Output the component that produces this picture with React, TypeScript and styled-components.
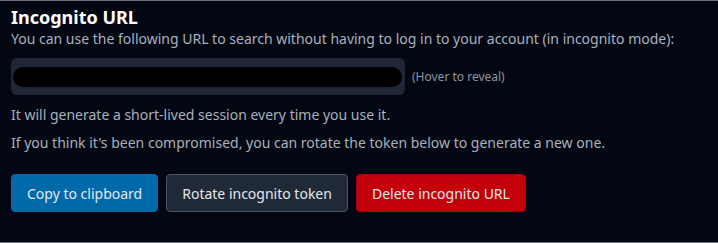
import styled, { createGlobalStyle } from 'styled-components'

const Global = createGlobalStyle`
    html, body {
        margin: 0;
        padding: 0;
        background: #030712;
    }
    body {
        font-family: "Noto Sans", "Open Sans", sans-serif;
    }
`

const Section = styled.section`
    box-sizing: border-box;
    height: 243px;
    padding: 4px 11px 0 11px;
    border-top: solid 1px #6b7280;
    border-bottom: solid 1px #6b7280;
    background: #030712;
    color: #a8b1bd;
`

const Title = styled.h2`
    margin: 0;
    font-size: 18px;
    line-height: 24px;
    font-weight: 700;
    color: #ffffff;
`

const Text = styled.p<{ $gap?: number }>`
    margin: ${props => props.$gap ?? 0}px 0 0 0;
    font-size: 14px;
    line-height: 20px;
`

const UrlRow = styled.div`
    display: flex;
    align-items: center;
    gap: 7px;
    margin: 9px 0 10px 0;
`

const UrlBox = styled.div`
    box-sizing: border-box;
    display: flex;
    align-items: center;
    width: 394px;
    height: 37px;
    padding: 0 3px 0 2px;
    border-radius: 6px;
    background: #1f2737;
`

const Secret = styled.span`
    flex: 1 1 auto;
    height: 20px;
    border-radius: 10px;
    background: #000000;
    color: #000000;
    overflow: hidden;
    font-size: 12px;
`

const Hint = styled.span`
    font-size: 12px;
    color: #8b94a3;
`

const Buttons = styled.div`
    display: flex;
    gap: 8px;
    margin-top: 21px;
`

type Variant = 'primary' | 'neutral' | 'danger'

const colors: Record<Variant, { bg: string, border: string }> = {
    primary: { bg: '#0069aa', border: '#0069aa' },
    neutral: { bg: '#1f2937', border: '#4b5563' },
    danger: { bg: '#c4000a', border: '#a8000a' },
}

const Button = styled.button<{ $variant: Variant }>`
    box-sizing: border-box;
    height: 38px;
    padding: 0 15px;
    border-radius: 4px;
    border: solid 1px ${props => colors[props.$variant].border};
    background: ${props => colors[props.$variant].bg};
    color: #e5e7eb;
    font-family: "Noto Sans", "Open Sans", sans-serif;
    font-size: 14px;
    cursor: pointer;
`

export default function App() {
    return (
        <>
            <Global />
            <Section>
                <Title>Incognito URL</Title>
                <Text>You can use the following URL to search without having to log in to your account (in incognito mode):</Text>

                <UrlRow>
                    <UrlBox>
                        <Secret>https://example.invalid/search?token=xxxxxxxxxxxxxxxx</Secret>
                    </UrlBox>
                    <Hint>(Hover to reveal)</Hint>
                </UrlRow>

                <Text>It will generate a short-lived session every time you use it.</Text>
                <Text $gap={8}>If you think it's been compromised, you can rotate the token below to generate a new one.</Text>

                <Buttons>
                    <Button $variant="primary">Copy to clipboard</Button>
                    <Button $variant="neutral">Rotate incognito token</Button>
                    <Button $variant="danger">Delete incognito URL</Button>
                </Buttons>
            </Section>
        </>
    )
}
